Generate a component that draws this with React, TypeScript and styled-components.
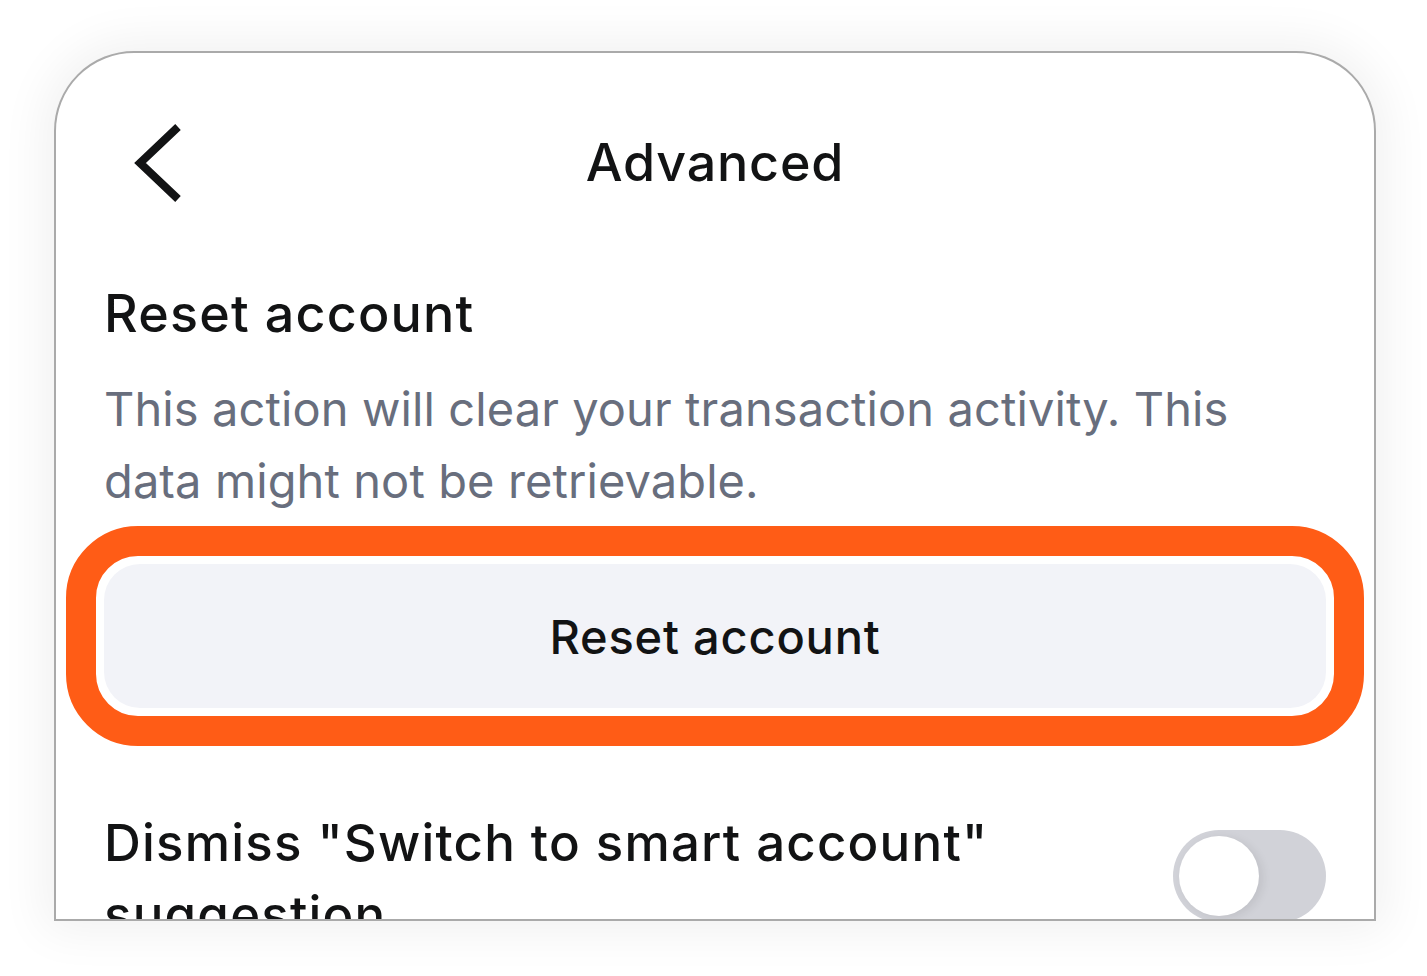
import React from 'react';
import styled, { createGlobalStyle } from 'styled-components';

const GlobalStyle = createGlobalStyle`
  html, body {
    margin: 0;
    padding: 0;
    background: #ffffff;
  }
  body {
    font-family: Inter, 'Noto Sans', 'Liberation Sans', sans-serif;
    color: #121314;
  }
`;

const Page = styled.div`
  width: 1427px;
  height: 976px;
  padding: 51px 51px 0 54px;
  box-sizing: border-box;
  overflow: hidden;
`;

const Card = styled.div`
  width: 1322px;
  height: 870px;
  box-sizing: border-box;
  border: 2px solid #aaaaaa;
  border-radius: 80px 80px 0 0;
  background: #ffffff;
  box-shadow: 0 0 48px 10px rgba(0, 0, 0, 0.06);
  padding: 0 48px;
  overflow: hidden;
`;

const Header = styled.div`
  height: 220px;
  display: grid;
  grid-template-columns: 1fr auto 1fr;
  align-items: center;
`;

const BackButton = styled.button`
  justify-self: start;
  margin-left: 24px;
  padding: 0;
  border: none;
  background: none;
  width: 60px;
  height: 90px;
  display: flex;
  cursor: pointer;
`;

const Title = styled.h1`
  margin: 0;
  font-size: 52px;
  font-weight: 500;
  letter-spacing: 0.8px;
  line-height: 72px;
  color: #121314;
`;

const Section = styled.div`
  margin-top: 5px;
`;

const Heading = styled.h2`
  margin: 0;
  font-size: 52px;
  font-weight: 500;
  letter-spacing: 1.2px;
  line-height: 72px;
  color: #121314;
`;

const Description = styled.p`
  margin: 23px 0 0;
  font-size: 47px;
  font-weight: 400;
  letter-spacing: 0.1px;
  line-height: 72px;
  color: #686e7d;
`;

const Highlight = styled.div`
  margin: 9px -38px 0;
  border: 30px solid #ff5c16;
  border-radius: 72px;
  padding: 8px;
  background: #ffffff;
`;

const ActionButton = styled.button`
  width: 100%;
  height: 144px;
  border: none;
  border-radius: 36px;
  background: #f2f3f8;
  font-family: inherit;
  font-size: 47px;
  font-weight: 500;
  letter-spacing: 0.8px;
  color: #121314;
  cursor: pointer;
`;

const SettingRow = styled.div`
  display: flex;
  align-items: flex-start;
  gap: 40px;
  margin-top: 61px;
`;

const SettingLabel = styled.div`
  flex: 1;
  font-size: 51px;
  font-weight: 500;
  letter-spacing: 1.2px;
  line-height: 72px;
  color: #121314;
`;

const Toggle = styled.div<{ on?: boolean }>`
  flex: none;
  width: 153px;
  height: 92px;
  margin-top: 23px;
  border-radius: 46px;
  background: ${(p) => (p.on ? '#4459ff' : '#d1d2d8')};
  padding: 6px;
  box-sizing: border-box;
  display: flex;
  justify-content: ${(p) => (p.on ? 'flex-end' : 'flex-start')};
`;

const Knob = styled.div`
  width: 80px;
  height: 80px;
  border-radius: 50%;
  background: #ffffff;
  box-shadow: 4px 2px 10px rgba(0, 0, 0, 0.08);
`;

const App: React.FC = () => {
  return (
    <>
      <GlobalStyle />
      <Page>
        <Card>
          <Header>
            <BackButton aria-label="Back">
              <svg width="60" height="90" viewBox="0 0 60 90">
                <path
                  d="M50 9 L12 45 L50 81"
                  fill="none"
                  stroke="#121314"
                  strokeWidth="8"
                  strokeLinejoin="miter"
                />
              </svg>
            </BackButton>
            <Title>Advanced</Title>
            <span />
          </Header>
          <Section>
            <Heading>Reset account</Heading>
            <Description>
              This action will clear your transaction activity. This data might
              not be retrievable.
            </Description>
            <Highlight>
              <ActionButton>Reset account</ActionButton>
            </Highlight>
          </Section>
          <SettingRow>
            <SettingLabel>Dismiss "Switch to smart account" suggestion</SettingLabel>
            <Toggle>
              <Knob />
            </Toggle>
          </SettingRow>
        </Card>
      </Page>
    </>
  );
};

export default App;
